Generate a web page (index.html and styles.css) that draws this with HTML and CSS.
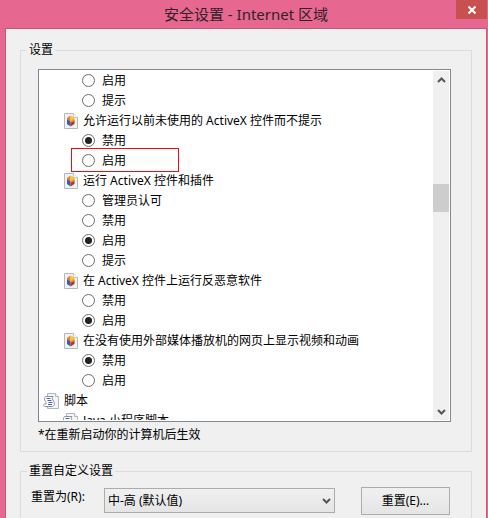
FILE: index.html
```html
<!DOCTYPE html>
<html lang="zh-CN">
<head>
    <meta charset="UTF-8">
    <meta name="viewport" content="width=device-width, initial-scale=1.0">
    <title>安全设置 - Internet 区域</title>
    <link rel="stylesheet" href="styles.css">
</head>
<body>
    <svg class="sprite" aria-hidden="true">
        <symbol id="icon-activex" viewBox="0 0 14 16">
            <path d="M.5.5h9l4 4v11H.5z" fill="#f1f2f4" stroke="#b4b7ba"/>
            <path d="M9.500.5v4h4" fill="#fff" stroke="#c4c7c9"/>
            <path d="M6.500 2.500L3 5v3l3.500 2z" fill="#ec7a32"/>
            <path d="M6.500 2.500L10.500 4.500v5L6.500 10z" fill="#f8c537"/>
            <path d="M3 6.500l3.500 2v5L3 11z" fill="#2f5fc4"/>
            <path d="M6.500 9l4-1.500V11l-4 2.500z" fill="#a8383a"/>
            <path d="M6.500 8l4-2v2l-4 2z" fill="#ee8f2c"/>
        </symbol>
        <symbol id="icon-script" viewBox="0 0 16 16">
            <path d="M4.500.5h8l3 3v12h-11z" fill="#f4f5f6" stroke="#b4b7ba"/>
            <path d="M12.500.5v3h3" fill="#fff" stroke="#b4b7ba"/>
            <path d="M3 3.500h7c-1.500 1.500-.5 3 .5 4.500s1.500 4.500-1 5.500H2c-2 0-2-2.500 0-2.500h1C4 9 1 8 1.500 5.500c.2-1.200.7-2 1.500-2z" fill="#fff" stroke="#8d9299"/>
            <path d="M3.500 5.500h4M4.500 7.500h4M5.500 9.500h4M5 11.500h4" stroke="#4560b8"/>
        </symbol>
        <symbol id="icon-chevron" viewBox="0 0 9 6">
            <path d="M1 1l3.500 3.500L8 1" fill="none" stroke="#555" stroke-width="2"/>
        </symbol>
    </svg>

    <div class="window">
        <div class="title-bar">
            <h1 class="title">安全设置 - Internet 区域</h1>
            <button class="close" type="button" aria-label="关闭">
                <svg width="8" height="8" viewBox="0 0 8 8"><path d="M.5.5l7 7M7.500.5l-7 7" stroke="#fff" stroke-width="2"/></svg>
            </button>
        </div>
        <div class="client">
            <fieldset class="group">
                <legend>设置</legend>
                <div class="list-box">
                    <div class="list">
                        <label class="row option"><input type="radio" name="g0">启用</label>
                        <label class="row option"><input type="radio" name="g0">提示</label>
                        <div class="row item"><svg class="item-icon"><use href="#icon-activex"/></svg>允许运行以前未使用的 ActiveX 控件而不提示</div>
                        <label class="row option"><input type="radio" name="g1" checked>禁用</label>
                        <label class="row option marked"><input type="radio" name="g1">启用</label>
                        <div class="row item"><svg class="item-icon"><use href="#icon-activex"/></svg>运行 ActiveX 控件和插件</div>
                        <label class="row option"><input type="radio" name="g2">管理员认可</label>
                        <label class="row option"><input type="radio" name="g2">禁用</label>
                        <label class="row option"><input type="radio" name="g2" checked>启用</label>
                        <label class="row option"><input type="radio" name="g2">提示</label>
                        <div class="row item"><svg class="item-icon"><use href="#icon-activex"/></svg>在 ActiveX 控件上运行反恶意软件</div>
                        <label class="row option"><input type="radio" name="g3">禁用</label>
                        <label class="row option"><input type="radio" name="g3" checked>启用</label>
                        <div class="row item"><svg class="item-icon"><use href="#icon-activex"/></svg>在没有使用外部媒体播放机的网页上显示视频和动画</div>
                        <label class="row option"><input type="radio" name="g4" checked>禁用</label>
                        <label class="row option"><input type="radio" name="g4">启用</label>
                        <div class="row category"><svg class="script-icon"><use href="#icon-script"/></svg>脚本</div>
                        <div class="row subcategory"><svg class="script-icon"><use href="#icon-script"/></svg>Java 小程序脚本</div>
                    </div>
                    <div class="scrollbar">
                        <svg class="chevron up"><use href="#icon-chevron"/></svg>
                        <div class="track"><div class="thumb"></div></div>
                        <svg class="chevron"><use href="#icon-chevron"/></svg>
                    </div>
                </div>
                <p class="note">*在重新启动你的计算机后生效</p>
            </fieldset>

            <fieldset class="group reset">
                <legend>重置自定义设置</legend>
                <div class="reset-row">
                    <label class="reset-label" for="level">重置为(R):</label>
                    <div class="select-wrap">
                        <select id="level">
                            <option>中-高 (默认值)</option>
                        </select>
                        <svg class="chevron"><use href="#icon-chevron"/></svg>
                    </div>
                    <button class="reset-button" type="button">重置(E)...</button>
                </div>
            </fieldset>
        </div>
    </div>
</body>
</html>
```

FILE: styles.css
```css
*, *::before, *::after {
    box-sizing: border-box;
}
body {
    margin: 0;
    background-color: #e66790;
    color: #000;
    font-family: "Noto Sans", "Noto Sans CJK SC", sans-serif;
    font-size: 12px;
    line-height: 16px;
}
.sprite {
    display: none;
}
.window {
    display: flex;
    flex-direction: column;
    height: 100vh;
    overflow: hidden;
}
.title-bar {
    position: relative;
    flex: none;
    padding: 4px 0;
}
.title {
    margin: 0;
    padding-left: 4px;
    color: #33202a;
    font-size: 15px;
    font-weight: normal;
    line-height: 20px;
    text-align: center;
}
.close {
    position: absolute;
    top: 0;
    right: 1px;
    display: flex;
    align-items: center;
    justify-content: center;
    width: 31px;
    height: 19px;
    padding: 0;
    border: none;
    background-color: #c75050;
}
.client {
    display: flex;
    flex: 1;
    flex-direction: column;
    gap: 11px;
    margin: 0 1px 0 5px;
    padding: 13px 14px 0;
    border: 1px solid #c4587b;
    border-bottom: none;
    background-color: #f0f0f0;
}
.group {
    min-width: 0;
    margin: 0;
    padding: 11px 20px 8px 17px;
    border: 1px solid #dcdcdc;
}
.group legend {
    margin-left: -11px;
    padding: 0 2px;
}
.list-box {
    display: flex;
    height: 353px;
    padding-bottom: 1px;
    border: 1px solid #828790;
    background-color: #fff;
}
.list {
    flex: 1;
    overflow: hidden;
}
.row {
    display: flex;
    align-items: center;
    height: 20px;
    padding-top: 2px;
    line-height: 18px;
    white-space: nowrap;
}
.option {
    position: relative;
    gap: 7px;
    padding-left: 43px;
}
.item {
    gap: 5px;
    padding-left: 25px;
}
.category {
    gap: 5px;
    padding-left: 4px;
}
.subcategory {
    gap: 5px;
    padding-left: 23px;
}
.item-icon {
    width: 14px;
    height: 16px;
}
.script-icon {
    width: 16px;
    height: 16px;
}
.option input {
    display: grid;
    place-items: center;
    width: 13px;
    height: 13px;
    margin: 0 0 1px;
    border: 1px solid #6c6c6c;
    border-radius: 50%;
    background-color: #fff;
    appearance: none;
}
.option input:checked::before {
    content: "";
    width: 7px;
    height: 7px;
    border-radius: 50%;
    background-color: #222;
}
.marked::after {
    content: "";
    position: absolute;
    top: -2px;
    left: 32px;
    width: 108px;
    height: 24px;
    border: 1px solid #e81010;
}
.scrollbar {
    display: flex;
    flex-direction: column;
    align-items: center;
    width: 16px;
    margin: 1px 1px 0 0;
    padding: 6px 0 5px;
    background-color: #f0f0f0;
}
.chevron {
    flex: none;
    width: 9px;
    height: 6px;
}
.chevron.up {
    transform: rotate(180deg);
}
.track {
    flex: 1;
    align-self: stretch;
    padding-top: 101px;
}
.thumb {
    height: 28px;
    background-color: #cdcdcd;
}
.note {
    margin: 5px 0 0;
}
.reset {
    flex: 1;
    padding: 8px 21px 0 10px;
    border-bottom: none;
}
.reset legend {
    margin-left: -4px;
}
.reset-row {
    display: flex;
    align-items: flex-start;
}
.reset-label {
    width: 73px;
    padding-top: 2px;
}
.select-wrap {
    position: relative;
    flex: 1;
    margin: 1px 26px 0 0;
}
.select-wrap select {
    display: block;
    width: 100%;
    height: 25px;
    padding: 0 3px;
    border: 1px solid #acacac;
    border-radius: 0;
    background: linear-gradient(#f0f0f0, #e5e5e5);
    color: #000;
    font: inherit;
    appearance: none;
}
.select-wrap .chevron {
    position: absolute;
    top: 10px;
    right: 4px;
    pointer-events: none;
}
.reset-button {
    width: 89px;
    height: 28px;
    padding: 0;
    border: 1px solid #acacac;
    background: linear-gradient(#f0f0f0, #e5e5e5);
    color: #000;
    font: inherit;
}
```
